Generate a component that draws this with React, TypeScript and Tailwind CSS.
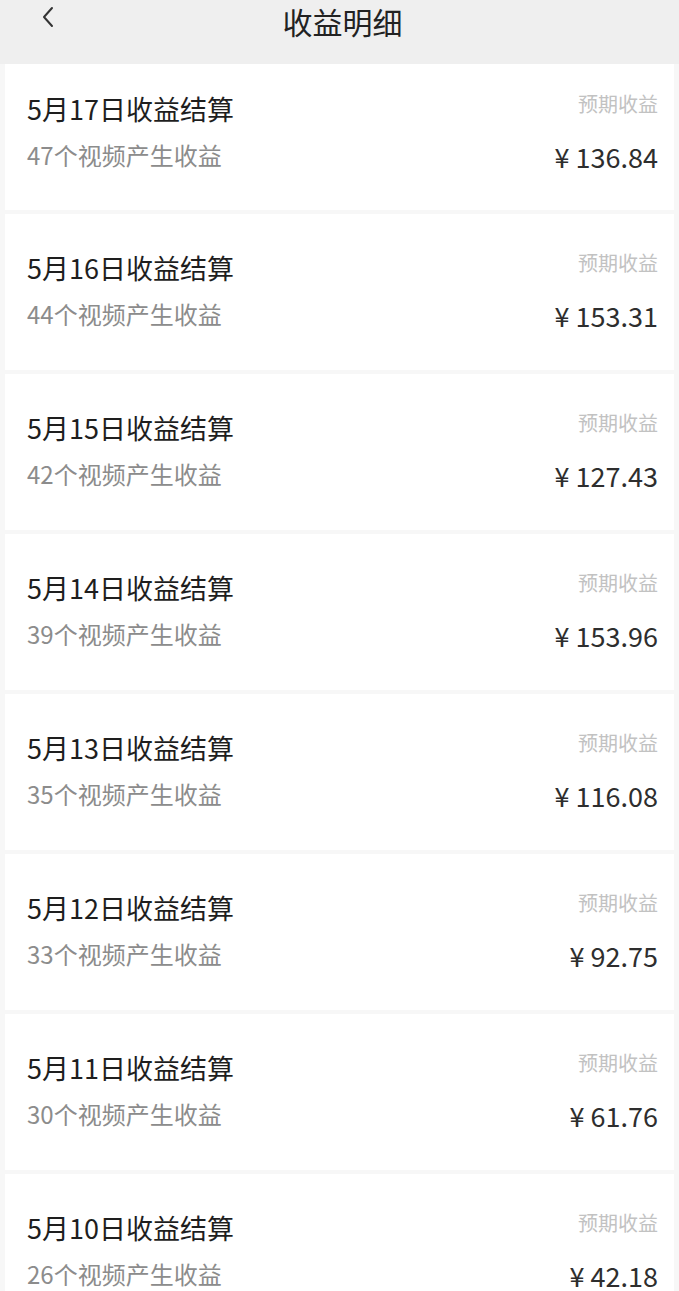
// Daily earnings list: date + video count on the left, expected amount on the right.

const ROWS: { day: number; videos: number; amount: string }[] = [
  { day: 17, videos: 47, amount: "136.84" },
  { day: 16, videos: 44, amount: "153.31" },
  { day: 15, videos: 42, amount: "127.43" },
  { day: 14, videos: 39, amount: "153.96" },
  { day: 13, videos: 35, amount: "116.08" },
  { day: 12, videos: 33, amount: "92.75" },
  { day: 11, videos: 30, amount: "61.76" },
  { day: 10, videos: 26, amount: "42.18" },
];

const font = "font-['Noto_Sans_CJK_SC','Noto_Sans',sans-serif]";

function Row({ day, videos, amount, first }: { day: number; videos: number; amount: string; first: boolean }) {
  return (
    <div
      className={`flex justify-between bg-white pl-[22px] pr-[16px] ${first ? "h-[146px] pt-[27px]" : "h-[156px] pt-[36px]"}`}
    >
      <div className="flex flex-col">
        <span className="text-[27px] leading-[36px] text-[#1e1e1e]">5月{day}日收益结算</span>
        <span className="mt-[11px] text-[24px] leading-[34px] text-[#8c8c8c]">{videos}个视频产生收益</span>
      </div>
      <div className="flex flex-col items-end">
        <span className="text-[20px] leading-[26px] text-[#c2c2c2]">预期收益</span>
        <span className="mt-[21px] flex items-baseline text-[27px] leading-[38px] text-[#2e2e2e]">
          <span className="mr-[6px]">¥</span>
          {amount}
        </span>
      </div>
    </div>
  );
}

export default function App() {
  return (
    <div className={`${font} min-h-[1291px] w-[679px] overflow-hidden bg-[#f7f7f7]`}>
      <div className="relative flex h-[64px] items-start justify-center bg-[#efefef]">
        <svg
          className="absolute left-[40px] top-[5px] h-[24px] w-[16px]"
          viewBox="0 0 16 24"
          fill="none"
          stroke="#333"
          strokeWidth="2"
          strokeLinecap="round"
          strokeLinejoin="round"
        >
          <path d="M12 3 4 12l8 9" />
        </svg>
        <span className="ml-[6px] mt-[1px] text-[30px] leading-[40px] text-[#222]">收益明细</span>
      </div>
      <div className="flex flex-col gap-[4px] px-[5px]">
        {ROWS.map((r, i) => (
          <Row key={r.day} {...r} first={i === 0} />
        ))}
      </div>
    </div>
  );
}
